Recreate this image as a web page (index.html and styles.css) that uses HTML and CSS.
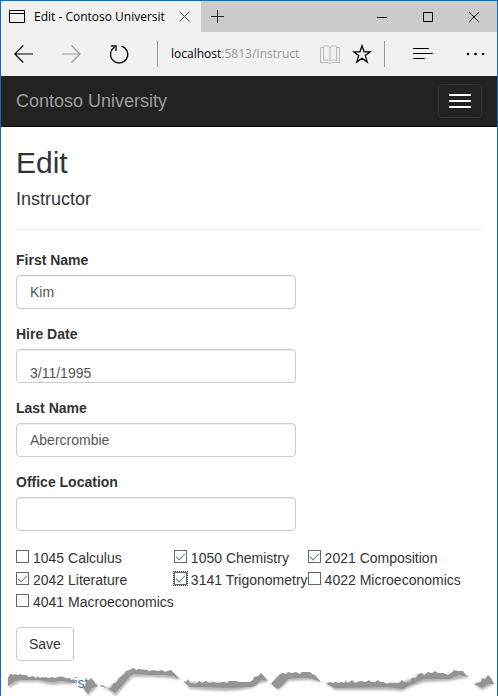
FILE: index.html
```html
<!DOCTYPE html>
<html lang="en">
<head>
<meta charset="utf-8">
<meta name="viewport" content="width=device-width, initial-scale=1">
<title>Edit - Contoso University</title>
<link rel="stylesheet" href="styles.css">
</head>
<body>
<div class="window">
  <div class="titlebar">
    <div class="tab">
      <svg class="tab-icon" width="16" height="13" viewBox="0 0 16 13" fill="none" stroke="#000"><path d="M.5.5h15v12H.5zM.5 3.5h15"/></svg>
      <span class="tab-title">Edit - Contoso Universit</span>
      <button class="icon-button" aria-label="Close tab"><svg width="11" height="11" viewBox="0 0 11 11" fill="none" stroke="#444"><path d="M.5.5l10 10M10.500.5l-10 10"/></svg></button>
    </div>
    <button class="icon-button new-tab" aria-label="New tab"><svg width="13" height="13" viewBox="0 0 13 13" fill="none" stroke="#222"><path d="M6.500 0v13M0 6.500h13"/></svg></button>
    <div class="window-controls">
      <button class="icon-button" aria-label="Minimize"><svg width="10" height="10" viewBox="0 0 10 10" fill="none" stroke="#000"><path d="M0 5.500h10"/></svg></button>
      <button class="icon-button" aria-label="Maximize"><svg width="10" height="10" viewBox="0 0 10 10" fill="none" stroke="#000"><path d="M.5.5h9v9h-9z"/></svg></button>
      <button class="icon-button" aria-label="Close window"><svg width="10" height="10" viewBox="0 0 10 10" fill="none" stroke="#000"><path d="M0 0l10 10M10 0L0 10"/></svg></button>
    </div>
  </div>

  <div class="toolbar">
    <div class="history">
      <button class="icon-button" aria-label="Back"><svg width="19" height="18" viewBox="0 0 19 18" fill="none" stroke="#000" stroke-width="1.200"><path d="M19 9H.8M9.300.5L.8 9l8.500 8.500"/></svg></button>
      <button class="icon-button" aria-label="Forward"><svg width="19" height="18" viewBox="0 0 19 18" fill="none" stroke="#999" stroke-width="1.200"><path d="M0 9h18M9.500.5L18 9l-8.500 8.500"/></svg></button>
      <button class="icon-button" aria-label="Refresh"><svg width="20" height="20" viewBox="1 0 20 20" fill="none" stroke="#111" stroke-width="1.400"><path d="M12.500 2.100A8.600 8.600 0 1 1 5.500 3.100M2 2h5v5"/></svg></button>
    </div>
    <span class="divider"></span>
    <div class="address"><span class="host">localhost</span>:5813/Instruct</div>
    <button class="icon-button" aria-label="Reading view"><svg width="20" height="19" viewBox="0 0 20 19" fill="none" stroke="#bbb"><path d="M3.500 2.500h-3v15h8l1.500 1 1.500-1h8v-15h-3M10 2.500C8 .3 5.500.3 3.500 1.500v14c2-.8 4.500-.8 6.500.5 2-1.300 4.500-1.300 6.500-.5v-14C14.500.3 12 .3 10 2.500zM10 2.500V16"/></svg></button>
    <button class="icon-button favorite" aria-label="Add to favorites"><svg width="20" height="20" viewBox="0 0 20 20" fill="none" stroke="#000" stroke-width="1.300"><path d="M10 1.800l2.100 6h6.200l-5 3.800 1.900 6.400-5.200-3.800L4.800 18l1.900-6.400-5-3.800h6.200z"/></svg></button>
    <span class="divider"></span>
    <div class="tools">
      <button class="icon-button" aria-label="Hub"><svg width="20" height="12" viewBox="0 0 20 12" fill="none" stroke="#000"><path d="M0 .5h16M0 5.500h20M0 10.500h12"/></svg></button>
      <button class="icon-button" aria-label="More"><svg width="19" height="4" viewBox="0 0 19 4"><circle cx="2" cy="2" r="1.300"/><circle cx="9.500" cy="2" r="1.300"/><circle cx="17" cy="2" r="1.300"/></svg></button>
    </div>
  </div>

  <nav class="navbar">
    <a class="brand" href="#">Contoso University</a>
    <button class="menu-toggle" aria-label="Toggle navigation"><span class="bar"></span><span class="bar"></span><span class="bar"></span></button>
  </nav>

  <main class="content">
    <h2>Edit</h2>
    <h4>Instructor</h4>
    <hr>
    <form>
      <div class="group">
        <label for="first-name">First Name</label>
        <input class="field" id="first-name" type="text" value="Kim">
      </div>
      <div class="group">
        <label for="hire-date">Hire Date</label>
        <input class="field date" id="hire-date" type="text" value="3/11/1995">
      </div>
      <div class="group">
        <label for="last-name">Last Name</label>
        <input class="field" id="last-name" type="text" value="Abercrombie">
      </div>
      <div class="group">
        <label for="office">Office Location</label>
        <input class="field" id="office" type="text">
      </div>
      <div class="courses">
        <label class="course"><input type="checkbox">1045 Calculus</label>
        <label class="course"><input type="checkbox" checked>1050 Chemistry</label>
        <label class="course"><input type="checkbox" checked>2021 Composition</label>
        <label class="course"><input type="checkbox" checked>2042 Literature</label>
        <label class="course"><input class="focused" type="checkbox" checked>3141 Trigonometry</label>
        <label class="course"><input type="checkbox">4022 Microeconomics</label>
        <label class="course"><input type="checkbox">4041 Macroeconomics</label>
      </div>
      <button class="save" type="button">Save</button>
    </form>
    <a class="back-link" href="#">Back to List</a>
  </main>

  <svg class="torn-edge" viewBox="0 660 498 36" preserveAspectRatio="none" aria-hidden="true">
    <defs>
      <filter id="soft" x="-5%" y="-20%" width="110%" height="150%"><feGaussianBlur stdDeviation="1"/></filter>
    </defs>
    <path fill="#fff" d="M0 684H8V676L20 675 35 677 50 679 63 678 73 680 76 682 78 688 84 692 91 680 100 687 110 689 124 673 131 670 155 672 170 671 180 680 192 684 251 683 261 674 272 684 280 675 296 673 312 675 328 684 400 683 418 675 449 676 462 672 475 683 489 676 494 684 498 687V696H0z"/>
    <path fill="#b5b5b5" filter="url(#soft)" d="M8 677L38 679 73 681 76 684 62 684 52 685 38 682 20 682 9 688zM84 687L91 680 98 686 94 690 88 696zM101 687L108 688 126 673 172 673 180 680 170 678 150 677 133 677 126 684 116 696 108 690zM184 682L250 683 261 676 268 682 261 683 252 688 240 690 226 691 205 690 190 689zM272 684L280 676 312 676 321 682 309 680 289 681 279 690zM325 683L400 683 418 676 462 674 469 678 459 679 449 681 425 682 413 686 402 691 388 690 335 690zM474 684L489 678 494 684 490 686 482 690z"/>
    <path fill="#949494" d="M8 686V678L10 674H12L13 675 15 674 18 675 20 674 23 675 26 675 29 677 33 676 36 678 38 676 40 678 46 677 48 678 52 677 54 678 59 677 61 676 63 677 66 678 68 679 70 678 71 680 74 679 76 683 73 683 62 681 52 682 38 680 20 680 15 681z
      M83 688L86 684 87 680 89 680 91 678 93 680 95 683 98 686 92 688 88 694z
      M99 686L102 685 108 688 111 688 113 684 117 682 119 678 124 674 126 671 130 670 131 669 134 668 136 670 138 669 147 670 149 671 153 670 158 671 162 670 165 672 167 671 171 670 174 673 176 675 180 680 173 676 165 675 150 675 134 674 130 676 125 682 119 689 115 693 108 688z
      M183 681L186 682 188 679 190 683 196 684 199 681 202 683 206 681 209 683 213 682 218 683 223 682 227 683 229 681 235 681 240 682 250 682 253 680 254 677 258 676 261 673 264 676 268 681 261 680 255 686 250 687 226 688 205 687 190 687z
      M271 684L276 678 280 674 283 673 286 674 288 672 292 673 296 672 300 674 302 672 310 672 312 674 315 675 321 682 309 678 297 678 288 679 281 687 277 689z
      M324 683L327 684 329 682 333 683 336 682 338 683 342 682 344 683 346 681 348 683 352 680 355 683 360 681 366 682 369 680 371 682 375 682 378 680 380 682 383 682 387 684 390 683 399 683 402 680 404 682 410 682 412 678 416 678 418 674 422 673 424 675 428 672 432 673 435 671 438 673 443 673 448 675 451 673 454 670 458 671 463 671 466 675 469 677 459 675 449 679 424 679 413 684 402 689 388 687 335 688z
      M474 684L478 683 481 682 482 678 485 679 488 675 491 678 494 684 488 684 482 688z"/>
  </svg>
</div>
</body>
</html>
```

FILE: styles.css
```css
* {
  box-sizing: border-box;
}

body {
  margin: 0;
  background: #fff;
  color: #333;
  font: 14px/20px "Liberation Sans", Arial, sans-serif;
}

button,
input {
  font: inherit;
  color: inherit;
}

svg {
  display: block;
}

.window {
  position: relative;
  min-height: 100vh;
  border: 1px solid #1a6aab;
  border-bottom: 0;
  overflow: hidden;
}

.icon-button {
  display: flex;
  align-items: center;
  justify-content: center;
  flex: none;
  padding: 0;
  border: 0;
  background: none;
}

/* Browser chrome */
.titlebar {
  display: flex;
  height: 31px;
  background: #ccc;
}

.tab {
  display: flex;
  align-items: center;
  width: 200px;
  padding: 0 11px 0 8px;
  background: #f1f1f1;
  color: #000;
}

.tab-icon {
  flex: none;
  margin-right: 9px;
}

.tab-title {
  flex: 1;
  overflow: hidden;
  white-space: nowrap;
  font: 12px/20px "Open Sans", "Noto Sans", sans-serif;
}

.new-tab {
  width: 33px;
}

.window-controls {
  display: flex;
  margin-left: auto;
}

.window-controls .icon-button {
  width: 46px;
}

.toolbar {
  display: flex;
  align-items: center;
  height: 44px;
  padding: 0 12px 0 13px;
  background: #f1f1f1;
}

.history {
  display: flex;
  align-items: center;
  gap: 29px;
}

.divider {
  width: 1px;
  height: 26px;
  margin-left: 27px;
  background: #999;
}

.address {
  flex: 1;
  padding-left: 13px;
  overflow: hidden;
  white-space: nowrap;
  color: #999;
  font: 12px/20px "Open Sans", "Noto Sans", sans-serif;
}

.host {
  color: #000;
}

.favorite {
  margin-left: 12px;
}

.favorite + .divider {
  margin-left: 12px;
}

.tools {
  display: flex;
  align-items: center;
  gap: 33px;
  margin-left: 28px;
}

/* Site header */
.navbar {
  display: flex;
  align-items: center;
  justify-content: space-between;
  height: 51px;
  padding: 0 15px;
  border-bottom: 1px solid #080808;
  background: #222;
}

.brand {
  color: #9d9d9d;
  font-size: 18px;
  text-decoration: none;
}

.menu-toggle {
  display: flex;
  flex-direction: column;
  justify-content: center;
  gap: 4px;
  height: 34px;
  padding: 0 10px;
  border: 1px solid #333;
  border-radius: 4px;
  background: none;
}

.bar {
  width: 22px;
  height: 2px;
  border-radius: 1px;
  background: #fff;
}

/* Edit form */
.content {
  padding: 19px 15px 0;
}

h2,
h4 {
  margin: 0 0 10px;
  font-weight: 400;
}

h2 {
  font-size: 30px;
  line-height: 33px;
}

h4 {
  font-size: 18px;
  line-height: 20px;
}

hr {
  margin: 20px 0;
  border: 0;
  border-top: 1px solid #eee;
}

.group {
  margin-bottom: 15px;
}

.group label {
  display: block;
  margin-bottom: 5px;
  font-weight: 700;
}

.field {
  display: block;
  width: 100%;
  max-width: 280px;
  height: 34px;
  padding: 6px 13px;
  border: 1px solid #ccc;
  border-radius: 4px;
  background: #fff;
  box-shadow: inset 0 1px 1px rgba(0, 0, 0, 0.075);
  color: #555;
}

.date {
  padding-top: 14px;
  padding-bottom: 0;
}

.courses {
  display: grid;
  grid-template-columns: repeat(3, max-content);
  grid-auto-rows: 22px;
  margin: 16px 0 14px;
}

.course {
  display: flex;
  align-items: center;
  gap: 4px;
}

.course input {
  display: flex;
  justify-content: center;
  appearance: none;
  width: 13px;
  height: 13px;
  margin: 0 0 3px;
  border: 1px solid #666;
  background: #fff;
}

.course input:checked::after {
  content: "";
  width: 4px;
  height: 8px;
  border: solid #5f7f9f;
  border-width: 0 1px 1px 0;
  transform: rotate(45deg);
}

.course .focused {
  outline: 1px dotted #333;
}

.save {
  display: block;
  height: 34px;
  padding: 6px 12px;
  border: 1px solid #ccc;
  border-radius: 4px;
  background: #fff;
}

.back-link {
  display: block;
  width: max-content;
  margin-top: 12px;
  color: #337ab7;
  text-decoration: none;
}

.torn-edge {
  position: absolute;
  left: -1px;
  bottom: 0;
  width: calc(100% + 2px);
  height: 36px;
}
```
